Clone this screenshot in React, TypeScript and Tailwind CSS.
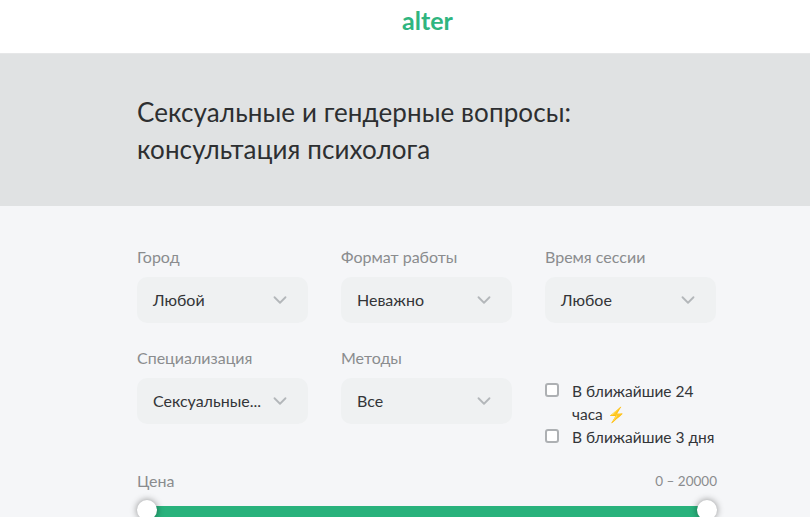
import React from 'react';
import { ChevronDown } from 'lucide-react';

const font = "font-['Lato','Noto_Sans',sans-serif]";

function Select({ label, value }: { label: string; value: string }) {
  return (
    <div className="w-[171px]">
      <div className="h-[22px] text-[16px] leading-[22px] text-[#8a8c8e]">{label}</div>
      <div className="mt-[9px] flex h-[46px] items-center justify-between rounded-[10px] bg-[#eff1f2] pl-4 pr-[17px]">
        <span className="text-[16px] text-[#333538]">{value}</span>
        <ChevronDown className="h-[22px] w-[22px] text-[#b3b7ba]" strokeWidth={2} />
      </div>
    </div>
  );
}

function Check({ children }: { children: React.ReactNode }) {
  return (
    <div className="flex gap-[13px]">
      <span className="mt-[3px] h-[14px] w-[14px] shrink-0 rounded-[3px] border-2 border-[#adb0b3] bg-white" />
      <span className="text-[15.5px] leading-[23px] text-[#333538]">{children}</span>
    </div>
  );
}

export default function App() {
  return (
    <div className={`h-[517px] w-[810px] overflow-hidden bg-[#f5f6f8] ${font}`}>
      <header className="flex h-[54px] items-center justify-center border-b border-[#e6e7e8] bg-white pb-[13px] pl-[45px]">
        <span className="text-[25px] font-bold leading-none text-[#2fb57f]">alter</span>
      </header>
      <section className="h-[152px] bg-[#e0e2e3] pl-[137px] pt-[40px]">
        <h1 className="text-[26px] font-normal leading-[37px] tracking-[0.1px] text-[#2d2f31]">
          Сексуальные и гендерные вопросы:
          <br />
          консультация психолога
        </h1>
      </section>
      <main className="pl-[137px] pr-[93px] pt-[40px]">
        <div className="flex gap-[33px]">
          <Select label="Город" value="Любой" />
          <Select label="Формат работы" value="Неважно" />
          <Select label="Время сессии" value="Любое" />
        </div>
        <div className="mt-[24px] flex gap-[33px]">
          <Select label="Специализация" value="Сексуальные..." />
          <Select label="Методы" value="Все" />
          <div className="w-[172px] pt-[33px]">
            <Check>
              В ближайшие 24 часа <span className="inline-block h-[15px] text-[15px] leading-[15px]">⚡</span>
            </Check>
            <Check>В ближайшие 3 дня</Check>
          </div>
        </div>
        <div className="mt-[20px] flex items-center justify-between">
          <span className="text-[16px] text-[#8a8c8e]">Цена</span>
          <span className="text-[13.5px] text-[#8a8c8e]">0 – 20000</span>
        </div>
        <div className="relative mx-[10px] mt-[13px] h-[24px] bg-[#29b27c]">
          <span className="absolute -left-[10px] -top-[6px] h-[20px] w-[20px] rounded-full bg-white shadow-[0_0_7px_rgba(0,0,0,0.45)]" />
          <span className="absolute -right-[10px] -top-[6px] h-[20px] w-[20px] rounded-full bg-white shadow-[0_0_7px_rgba(0,0,0,0.45)]" />
        </div>
      </main>
    </div>
  );
}
